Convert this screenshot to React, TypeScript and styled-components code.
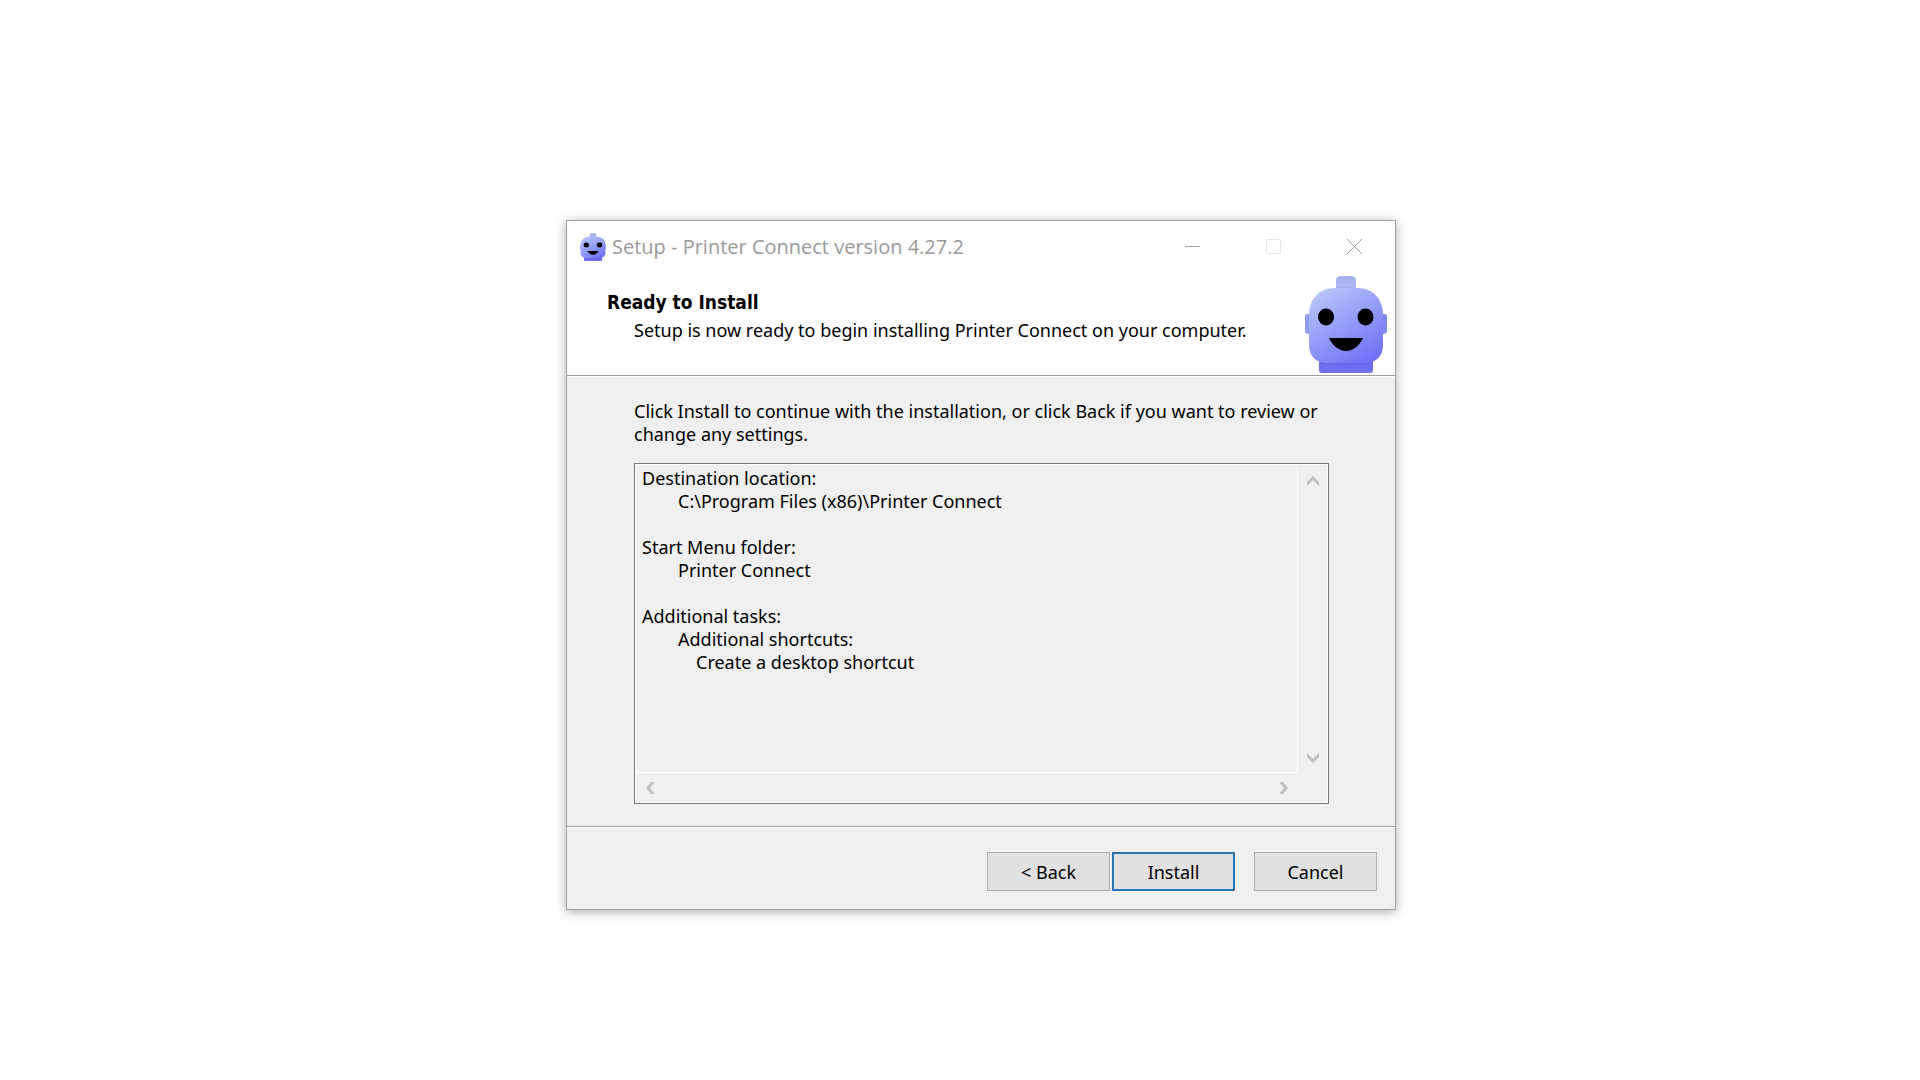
import React from "react";
import styled, { createGlobalStyle, css } from "styled-components";

const color = {
  face: "#f0f0f0",
  line: "#a0a0a0",
  frame: "#7a7a7a",
  muted: "#999999",
  arrow: "#bfbfbf",
  accent: "#2e74b5",
};

const GlobalStyle = createGlobalStyle`
  *, *::before, *::after { box-sizing: border-box; }
  body {
    margin: 0;
    background: #ffffff;
    color: #000000;
    font-family: "Noto Sans", "Open Sans", sans-serif;
    font-size: 18px;
    line-height: 23px;
  }
  button, textarea { font: inherit; color: inherit; }
`;

const Desktop = styled.main`
  display: flex;
  justify-content: center;
  align-items: center;
  min-height: 100vh;
  padding: 50px 0 0 42px;
`;

const Window = styled.section`
  display: flex;
  flex-direction: column;
  width: 100%;
  max-width: 830px;
  border: 1px solid ${color.line};
  background: ${color.face};
  box-shadow: 0 2px 10px rgba(0, 0, 0, 0.32);
`;

const TitleBar = styled.header`
  display: flex;
  align-items: stretch;
  height: 51px;
  padding-left: 13px;
  background: #ffffff;
`;

const WindowTitle = styled.div`
  display: flex;
  flex: 1;
  align-items: center;
  gap: 6px;
  color: ${color.muted};
  font-family: "Open Sans", "Noto Sans", sans-serif;
  font-size: 20px;
`;

const CaptionButton = styled.button`
  display: flex;
  justify-content: center;
  align-items: center;
  width: 81px;
  padding: 0;
  border: 0;
  background: none;
  color: ${color.muted};

  &:disabled { color: #e6e6e6; }
`;

const Banner = styled.div`
  display: flex;
  justify-content: space-between;
  align-items: flex-start;
  padding: 3px 7px 2px 40px;
  border-bottom: 1px solid ${color.line};
  background: #ffffff;
`;

const BannerText = styled.div`
  display: flex;
  flex-direction: column;
  gap: 5px;
  padding-top: 16px;
`;

const Heading = styled.h1`
  margin: 0;
  font-family: "DejaVu Sans Condensed", "Noto Sans", sans-serif;
  font-size: 19px;
  font-weight: 700;
  line-height: 23px;
`;

const Subheading = styled.p`
  margin: 0;
  padding-left: 27px;
`;

const Body = styled.div`
  display: flex;
  flex-direction: column;
  gap: 17px;
  padding: 23px 66px 22px 67px;
  border-top: 1px solid #ffffff;
`;

const Memo = styled.div`
  display: grid;
  grid-template-columns: 1fr 30px;
  grid-template-rows: auto 30px;
  border: 1px solid ${color.frame};
  box-shadow: inset 0 0 0 1px #ffffff;
`;

const MemoText = styled.textarea`
  display: block;
  width: 100%;
  height: 309px;
  padding: 2px 6px;
  border: 1px solid #ffffff;
  border-radius: 0;
  outline: 0;
  background: none;
  overflow: hidden;
  resize: none;
  tab-size: 18px;
  white-space: pre;
`;

const ScrollTrack = styled.div<{ $vertical?: boolean }>`
  display: flex;
  flex-direction: ${(p) => (p.$vertical ? "column" : "row")};
  justify-content: space-between;
  align-items: center;
  padding: ${(p) => (p.$vertical ? "2px 0 0" : "0")};
`;

const ScrollButton = styled.button`
  display: flex;
  justify-content: center;
  align-items: center;
  width: 30px;
  height: 30px;
  padding: 0;
  border: 0;
  background: none;
`;

const Footer = styled.footer`
  display: flex;
  justify-content: flex-end;
  gap: 19px;
  padding: 25px 18px 18px;
  border-top: 1px solid ${color.line};
  box-shadow: inset 0 1px 0 #ffffff;
`;

const Steps = styled.div`
  display: flex;
  gap: 2px;
`;

const PushButton = styled.button<{ $primary?: boolean }>`
  width: 123px;
  height: 39px;
  padding: 1px 0 0;
  border: 1px solid #adadad;
  border-radius: 0;
  background: #e1e1e1;

  ${(p) =>
    p.$primary &&
    css`
      border: 2px solid ${color.accent};
      box-shadow: inset 0 0 0 1px #d3e6f5;
    `}
`;

const Drawing = styled.svg`
  display: block;
  flex: none;
`;

type RobotProps = { id: string; width: number; height: number; viewBox: string };

function Robot({ id, width, height, viewBox }: RobotProps) {
  return (
    <Drawing width={width} height={height} viewBox={viewBox} preserveAspectRatio="none" aria-hidden="true">
      <defs>
        <linearGradient id={`${id}-head`} x1="0.15" y1="0" x2="0.75" y2="1">
          <stop offset="0" stopColor="#b9c7f8" />
          <stop offset="0.5" stopColor="#929ef8" />
          <stop offset="1" stopColor="#7072f6" />
        </linearGradient>
        <linearGradient id={`${id}-neck`} x1="0" y1="0" x2="0" y2="1">
          <stop offset="0" stopColor="#5f5ddd" />
          <stop offset="0.4" stopColor="#6d6cee" />
          <stop offset="1" stopColor="#7272f3" />
        </linearGradient>
        <linearGradient id={`${id}-top`} x1="0" y1="0" x2="0" y2="1">
          <stop offset="0" stopColor="#a5afee" />
          <stop offset="0.8" stopColor="#adb7f2" />
          <stop offset="1" stopColor="#98a4ea" />
        </linearGradient>
      </defs>
      <path d="M31 14V6Q31 1 36 1H46Q51 1 51 6V14Z" fill={`url(#${id}-top)`} />
      <path d="M4 39H2Q0 39 0 41V56Q0 59 4 59Z" fill="#8f9cf0" />
      <path d="M78 39H80Q82 39 82 41V56Q82 59 78 59Z" fill="#8189f0" />
      <path d="M14 86H68V95Q68 98 65 98H17Q14 98 14 95Z" fill={`url(#${id}-neck)`} />
      <path
        d="M30 13H52C68 13 78 24 78 40V70C78 81 71 88 60 88H22C11 88 4 81 4 70V40C4 24 14 13 30 13Z"
        fill={`url(#${id}-head)`}
      />
      <ellipse cx="21" cy="42" rx="8" ry="8.5" fill="#000000" />
      <ellipse cx="60.5" cy="42" rx="8" ry="8.5" fill="#000000" />
      <path d="M24 63H58C55 70 48 76 41 76C34 76 27 70 24 63Z" fill="#000000" />
    </Drawing>
  );
}

type Direction = "up" | "down" | "left" | "right";

const arrowPoints: Record<Direction, string> = {
  up: "0,6 6,0 12,6 12,10 6,4 0,10",
  down: "0,0 6,6 12,0 12,4 6,10 0,4",
  left: "5,0 9,0 4,6 9,12 5,12 0,6",
  right: "0,0 4,0 9,6 4,12 0,12 5,6",
};

function ScrollArrow({ direction }: { direction: Direction }) {
  const vertical = direction === "up" || direction === "down";
  const width = vertical ? 12 : 9;
  const height = vertical ? 10 : 12;
  return (
    <ScrollButton type="button" aria-label={`Scroll ${direction}`} disabled>
      <Drawing width={width} height={height} viewBox={`0 0 ${width} ${height}`}>
        <polygon points={arrowPoints[direction]} fill={color.arrow} />
      </Drawing>
    </ScrollButton>
  );
}

const summary = [
  "Destination location:",
  "\t\tC:\\Program Files (x86)\\Printer Connect",
  "",
  "Start Menu folder:",
  "\t\tPrinter Connect",
  "",
  "Additional tasks:",
  "\t\tAdditional shortcuts:",
  "\t\t\tCreate a desktop shortcut",
].join("\n");

export default function App() {
  return (
    <>
      <GlobalStyle />
      <Desktop>
        <Window>
          <TitleBar>
            <WindowTitle>
              <Robot id="small" width={26} height={28} viewBox="2 0 78 98" />
              <span>Setup - Printer Connect version 4.27.2</span>
            </WindowTitle>
            <CaptionButton type="button" aria-label="Minimize">
              <Drawing width="15" height="15" stroke="currentColor">
                <path d="M0 7.5H15" />
              </Drawing>
            </CaptionButton>
            <CaptionButton type="button" aria-label="Maximize" disabled>
              <Drawing width="15" height="15" fill="none" stroke="currentColor">
                <path d="M0.5 0.5H14.5V14.5H0.5Z" />
              </Drawing>
            </CaptionButton>
            <CaptionButton type="button" aria-label="Close">
              <Drawing width="15" height="15" stroke="currentColor">
                <path d="M0 0L15 15M15 0L0 15" />
              </Drawing>
            </CaptionButton>
          </TitleBar>
          <Banner>
            <BannerText>
              <Heading>Ready to Install</Heading>
              <Subheading>Setup is now ready to begin installing Printer Connect on your computer.</Subheading>
            </BannerText>
            <Robot id="large" width={84} height={98} viewBox="-1 0 84 98" />
          </Banner>
          <Body>
            <label htmlFor="summary">
              Click Install to continue with the installation, or click Back if you want to review or change any
              settings.
            </label>
            <Memo>
              <MemoText id="summary" readOnly wrap="off" value={summary} />
              <ScrollTrack $vertical>
                <ScrollArrow direction="up" />
                <ScrollArrow direction="down" />
              </ScrollTrack>
              <ScrollTrack>
                <ScrollArrow direction="left" />
                <ScrollArrow direction="right" />
              </ScrollTrack>
            </Memo>
          </Body>
          <Footer>
            <Steps>
              <PushButton type="button">&lt; Back</PushButton>
              <PushButton type="button" $primary>
                Install
              </PushButton>
            </Steps>
            <PushButton type="button">Cancel</PushButton>
          </Footer>
        </Window>
      </Desktop>
    </>
  );
}
